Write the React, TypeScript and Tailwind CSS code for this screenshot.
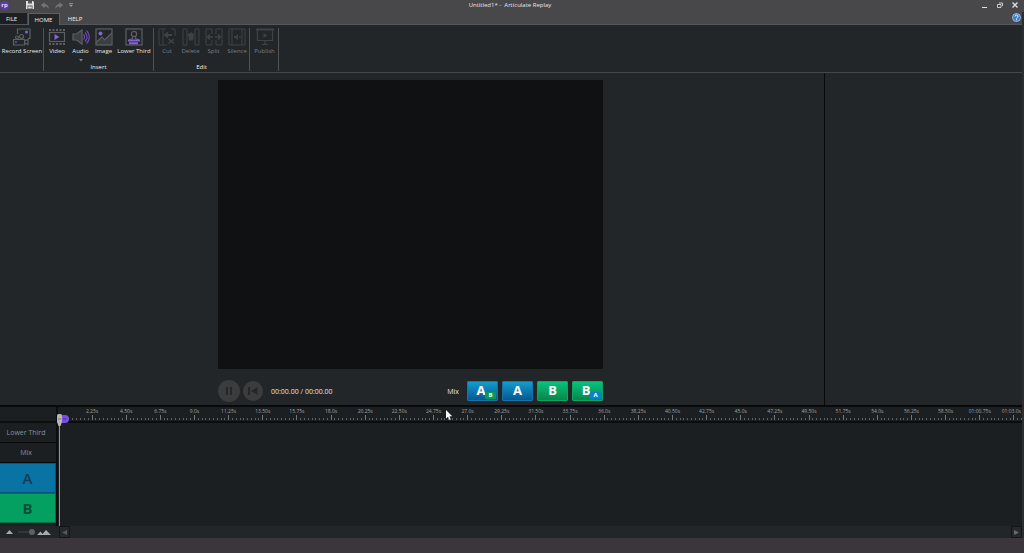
import type { ReactNode } from "react";
import clsx from "clsx";

const STEP = 2.25;
const MARKS = Array.from({ length: 28 }, (_, i) => (i + 1) * STEP);

function formatMark(t: number) {
  const min = Math.floor(t / 60);
  const sec = t - min * 60;
  const s = Number.isInteger(sec) ? sec.toFixed(1) : sec.toFixed(2);
  if (min === 0) return `${s}s`;
  return `0${min}:${sec < 10 ? "0" : ""}${s}s`;
}

/* ICONS */
function Icon({ children }: { children: ReactNode }) {
  return (
    <svg width="18" height="18" viewBox="0 0 18 18" fill="none" stroke="#5c6063" strokeWidth="1.2" aria-hidden>
      {children}
    </svg>
  );
}

const recordIcon = (
  <Icon>
    <path d="M4.500 6V1H17v9.500h-2" />
    <circle cx="13.500" cy="4" r="1.500" fill="#8461dc" stroke="none" />
    <circle cx="4" cy="9.500" r="1.500" />
    <circle cx="8.500" cy="8.500" r="2" />
    <path d="M.6 11.500h11v5.500H.6zM11.500 13l3.500-1.500v5l-3.500-1.500" />
    <path d="M2 14h2" stroke="#8461dc" />
  </Icon>
);

const videoIcon = (
  <Icon>
    <path d="M1 2h16M1 16h16" strokeWidth="2" strokeDasharray="2 1.500" />
    <rect x="1.500" y="4.500" width="15" height="9" />
    <path d="M6.500 6v6l5-3z" fill="#8461dc" stroke="none" />
  </Icon>
);

const audioIcon = (
  <Icon>
    <path d="M1 6h3.500L10 2v14l-5.500-4H1z" fill="#3b3f42" />
    <path d="M11.500 6.500a3.500 3.500 0 0 1 0 5M13 4.500a6 6 0 0 1 0 9M14.500 2.500a9 9 0 0 1 0 13" stroke="#684ab0" />
  </Icon>
);

const imageIcon = (
  <Icon>
    <path d="m1 14.500 5.500-4.500L8.500 12 16.500 7v10H1z" fill="#3b3f42" stroke="none" />
    <rect x="1" y="1" width="16" height="16" />
    <path d="m1 14.500 6-5.500 2.500 3L17 5" />
    <circle cx="5.500" cy="5.500" r="2" fill="#8461dc" stroke="none" />
  </Icon>
);

const lowerThirdIcon = (
  <Icon>
    <rect x="1" y="1" width="16" height="16" />
    <circle cx="9" cy="6" r="2.600" />
    <path d="M7.500 8.500v2L4 12M10.500 8.500v2L14 12" />
    <path d="M3 12.500h12M4 15.300h9" stroke="#8461dc" strokeWidth="2" />
  </Icon>
);

const cutIcon = (
  <Icon>
    <path d="M9 17H1V1h4v16M5 1h3M13 1h4v7" strokeWidth="1" />
    <path d="M7 7h7M10 4.500 7 7l3 2.500" strokeWidth="1.800" />
    <path d="m10.500 11 5.500 4.500M16 11l-5.500 4.500" strokeWidth="1.500" />
  </Icon>
);

const deleteIcon = (
  <Icon>
    <path d="M5 1H1v16h4zM13 1h4v16h-4z" strokeWidth="1" />
    <path d="M6.500 6h5v1h-5zM7 8h4l-.5 4h-3zM8 5h2" fill="#575b5e" />
  </Icon>
);

const splitIcon = (
  <Icon>
    <path d="M7 6V1H1v16h6v-5M11 6V1h6v16h-6v-5" strokeWidth="1" />
    <path d="M2.500 9H8M10 9h5.500M5 6.500 2.500 9 5 11.500M13 6.500 15.500 9 13 11.500" strokeWidth="1.600" />
  </Icon>
);

const silenceIcon = (
  <Icon>
    <path d="M1 1h16v16H1zM4 1v16M14 1v16" strokeWidth="1" />
    <path d="M6 8h1.500L10 6v6l-2.500-2H6z" fill="#575b5e" stroke="none" />
    <path d="M11 9h2" />
  </Icon>
);

const publishIcon = (
  <Icon>
    <path d="M0 1.500h18" strokeWidth="2" />
    <path d="M1.500 2v10.500h15V2M9 12.500V16M6 16.500h6" />
    <path d="M7.500 5v5l4-2.500z" fill="#575b5e" stroke="none" />
  </Icon>
);

interface ToolProps {
  label: string;
  icon: ReactNode;
  className: string;
  disabled?: boolean;
  menu?: boolean;
}

function Tool({ label, icon, className, disabled, menu }: ToolProps) {
  return (
    <button
      type="button"
      disabled={disabled}
      className={clsx(
        "flex flex-col items-center gap-px whitespace-nowrap text-[6px] leading-[8px]",
        disabled ? "text-[#7c7f82]" : "text-[#e6e7e8]",
        className,
      )}
    >
      <span className={clsx(disabled && "opacity-50")}>{icon}</span>
      <span>{label}</span>
      {menu && (
        <svg width="4" height="3" viewBox="0 0 4 3" className="mt-[3px]" aria-hidden>
          <path d="M0 0h4L2 2.500z" fill="#85888b" />
        </svg>
      )}
    </button>
  );
}

function Group({ label, children }: { label?: string; children: ReactNode }) {
  return (
    <section className="flex flex-col justify-between border-r border-[#505356]">
      <div className="flex items-start pl-px">{children}</div>
      {label && <div className="text-center text-[6px] leading-[8px] text-[#f0f0f1]">{label}</div>}
    </section>
  );
}

function MixButton({ main, sub }: { main: "A" | "B"; sub?: "A" | "B" }) {
  return (
    <button
      type="button"
      aria-label={sub ? `${main} with ${sub} inset` : main}
      className={clsx(
        "relative flex h-5 w-[31px] items-center justify-center rounded-[1px] border text-[13px] leading-none font-bold text-white",
        main === "A"
          ? "border-[#1374ab] bg-linear-to-b from-[#159bce] to-[#075992]"
          : "border-[#08a85e] bg-linear-to-b from-[#08c27d] to-[#098649]",
      )}
    >
      <span className={clsx(sub && "pr-[3px]")}>{main}</span>
      {sub && (
        <span
          className={clsx(
            "absolute right-px bottom-px flex h-[7px] w-[11px] items-center justify-center rounded-[1px] text-[6px] leading-none",
            sub === "A" ? "bg-[#0a82c8]" : "bg-[#079a55]",
          )}
        >
          {sub}
        </span>
      )}
    </button>
  );
}

function Ticks({ count, major }: { count: number; major?: number }) {
  return (
    <div className="flex h-[5px] items-end">
      {Array.from({ length: count }).map((_, i) => (
        <span key={i} className="flex flex-1 justify-center">
          <span className={clsx("w-px", i === major ? "h-[5px] bg-[#74777a]" : "h-[2px] bg-[#606366]")} />
        </span>
      ))}
    </div>
  );
}

function TitleBar() {
  return (
    <header className="grid h-3 grid-cols-3 items-center bg-[#48484a] pb-[2px] text-[#e6e6e7]">
      <div className="flex items-center">
        <span className="flex size-[9px] items-center justify-center rounded-full bg-[#5e3aa8] text-[6px] leading-none font-bold text-[#e4dcf6]">
          rp
        </span>
        <button type="button" aria-label="Save" className="ml-[17px]">
          <svg width="8" height="8" viewBox="0 0 8 8" aria-hidden>
            <path d="M0 0h7l1 1v7H0z" fill="#dededf" />
            <path d="M2 0h4v2.500H2zM1.500 4.500h5V8h-5z" fill="#57575a" />
            <path d="M2.200 5.500h3.500v2H2.200z" fill="#dededf" />
          </svg>
        </button>
        <button type="button" aria-label="Undo" className="ml-[7px]">
          <svg width="8" height="7" viewBox="0 0 8 7" aria-hidden>
            <path d="M0 3 3.500 0v2C6 2 7.500 3.500 8 7 6.500 5 5.500 4.500 3.500 4.500v2z" fill="#737376" />
          </svg>
        </button>
        <button type="button" aria-label="Redo" className="ml-[6px]">
          <svg width="8" height="7" viewBox="0 0 8 7" aria-hidden>
            <path d="M8 3 4.500 0v2C2 2 .5 3.500 0 7c1.500-2 2.500-2.500 4.500-2.500v2z" fill="#737376" />
          </svg>
        </button>
        <button type="button" aria-label="Customize toolbar" className="ml-[6px]">
          <svg width="4" height="4" viewBox="0 0 4 4" aria-hidden>
            <path d="M0 0h4v.8H0zM0 1.700h4L2 4z" fill="#9b9b9d" />
          </svg>
        </button>
      </div>
      <h1 className="pr-1 text-center text-[6px] leading-[8px]">Untitled1* -&nbsp; Articulate Replay</h1>
      <div className="flex items-center justify-end gap-[9px] pr-[6px]">
        <button type="button" aria-label="Minimize">
          <svg width="6" height="6" viewBox="0 0 6 6" aria-hidden>
            <path d="M0 5h5v1H0z" fill="#dededf" />
          </svg>
        </button>
        <button type="button" aria-label="Restore">
          <svg width="6" height="6" viewBox="0 0 6 6" fill="none" stroke="#c8c8ca" aria-hidden>
            <path d="M.5 2.500h3.500v3H.5zM2 1h3.500v3" />
          </svg>
        </button>
        <button type="button" aria-label="Close">
          <svg width="6" height="6" viewBox="0 0 6 6" stroke="#dededf" strokeWidth="1.400" aria-hidden>
            <path d="m.5.5 5 5m0-5-5 5" />
          </svg>
        </button>
      </div>
    </header>
  );
}

function Tabs() {
  return (
    <nav className="flex h-[13px] items-stretch border-b border-[#53575b] bg-[#48484a] text-[6px] leading-[8px] text-[#f0f0f1]">
      <button type="button" className="mt-px w-[27px] bg-[#1d2023] pr-1">FILE</button>
      <button type="button" className="mt-px -mb-px ml-px w-8 border border-b-0 border-[#5b5e62] bg-[#222629] pr-px">
        HOME
      </button>
      <button type="button" className="mt-px w-[30px]">HELP</button>
      <button type="button" aria-label="Help" className="mr-px mb-px ml-auto">
        <svg width="9" height="9" viewBox="0 0 9 9" aria-hidden>
          <circle cx="4.500" cy="4.500" r="4" fill="#3a7fd0" stroke="#a9c9ef" strokeWidth=".8" />
          <path d="M3 3.500c0-2 3-2 3 0 0 1-1.500 1-1.500 2M4.500 6.300v1" stroke="#fff" strokeWidth="1" fill="none" />
        </svg>
      </button>
    </nav>
  );
}

function Ribbon() {
  return (
    <div className="flex h-12 items-stretch border-b border-[#46494c] bg-[#222629] pt-[3px] pb-px">
      <Group>
        <Tool label="Record Screen" icon={recordIcon} className="w-[42px]" />
      </Group>
      <Group label="Insert">
        <Tool label="Video" icon={videoIcon} className="w-6" />
        <Tool label="Audio" icon={audioIcon} className="w-[23px]" menu />
        <Tool label="Image" icon={imageIcon} className="w-[23px]" />
        <Tool label="Lower Third" icon={lowerThirdIcon} className="w-[38px]" />
      </Group>
      <Group label="Edit">
        <Tool label="Cut" icon={cutIcon} className="w-6" disabled />
        <Tool label="Delete" icon={deleteIcon} className="w-[23px]" disabled />
        <Tool label="Split" icon={splitIcon} className="w-[23px]" disabled />
        <Tool label="Silence" icon={silenceIcon} className="w-6" disabled />
      </Group>
      <Group>
        <Tool label="Publish" icon={publishIcon} className="w-[27px]" disabled />
      </Group>
    </div>
  );
}

function Preview() {
  return (
    <main className="flex flex-1 justify-center pt-[7px] pr-[3px] pb-[3px]">
      <div className="w-[385px]">
        <div className="aspect-[4/3] bg-[#101113]" />
        <div className="mt-[11px] flex h-[22px] items-center">
          <button type="button" aria-label="Pause">
            <svg width="22" height="22" viewBox="0 0 22 22" aria-hidden>
              <circle cx="11" cy="11" r="11" fill="#3b3c3e" />
              <path d="M9 7v8M13 7v8" stroke="#24272a" strokeWidth="2" />
            </svg>
          </button>
          <button type="button" aria-label="Back to start" className="ml-[3px]">
            <svg width="20" height="20" viewBox="0 0 20 20" aria-hidden>
              <circle cx="10" cy="10" r="10" fill="#3b3c3e" />
              <path d="M5 6h2v8H5zM14.500 6v8L8 10z" fill="#24272a" />
            </svg>
          </button>
          <span className="ml-2 pt-[3px] text-[7px] leading-[10px] text-[#e2e3e4]">00:00.00 / 00:00.00</span>
          <span className="mr-2 ml-auto pt-[3px] text-[7px] leading-[10px] text-[#e2e3e4]">Mix</span>
          <div className="flex gap-1">
            <MixButton main="A" sub="B" />
            <MixButton main="A" />
            <MixButton main="B" />
            <MixButton main="B" sub="A" />
          </div>
        </div>
      </div>
    </main>
  );
}

function Timeline() {
  return (
    <section className="relative flex flex-1 flex-col border-t-2 border-[#08090b] bg-[#1b1f22]">
      <div className="flex flex-1">
        <div className="flex w-[58px] flex-col border-r-2 border-[#0b0d0f] text-center text-[7px] leading-[10px] text-[#8d9093]">
          <div className="h-4 border-b-2 border-[#0b0d0f]" />
          <div className="flex h-5 items-center justify-center border-b border-[#08090b] pt-[2px] pr-1">Lower Third</div>
          <div className="flex h-5 items-center justify-center border-b border-[#08090b] pt-[2px] pr-1">Mix</div>
          <div className="flex h-[30px] items-center justify-center border border-l-0 border-[#085579] bg-[#0973a4] text-[15px] font-semibold text-[#103e56]">
            A
          </div>
          <div className="flex h-[30px] items-center justify-center border border-l-0 border-[#087048] bg-[#04a062] text-[15px] font-bold text-[#0b5136]">
            B
          </div>
        </div>

        <div className="min-w-0 flex-1">
          {/* ruler */}
          <div className="flex h-4 overflow-hidden border-b-2 border-[#0b0d0f]">
            <div className="flex w-[17px] flex-col justify-end pb-px">
              <Ticks count={4} />
            </div>
            <div className="-mr-[9px] flex flex-1">
              {MARKS.map((t, i) => (
                <div key={t} className="flex min-w-0 flex-1 flex-col justify-between pb-px">
                  {/* the last cell runs past the edge, so its label sits against it */}
                  <span
                    className={clsx(
                      "flex text-[5px] leading-[8px] whitespace-nowrap text-[#a0a3a6]",
                      i === MARKS.length - 1 ? "justify-end pr-[10px]" : "justify-center",
                    )}
                  >
                    {formatMark(t)}
                  </span>
                  <Ticks count={9} major={4} />
                </div>
              ))}
            </div>
          </div>
        </div>
      </div>

      <div className="flex h-3 items-center bg-[#232629]">
        <div className="flex w-[59px] items-center pl-[6px]">
          <svg width="7" height="4" viewBox="0 0 7 4" aria-hidden>
            <path d="M0 4 3.500 0 7 4z" fill="#a5abb0" />
          </svg>
          <input
            type="range"
            aria-label="Timeline zoom"
            defaultValue={100}
            className="ml-[5px] h-[6px] w-[17px] appearance-none bg-linear-to-b from-transparent from-35% via-[#494b4d] via-50% to-transparent to-65% [&::-webkit-slider-thumb]:size-[6px] [&::-webkit-slider-thumb]:appearance-none [&::-webkit-slider-thumb]:rounded-full [&::-webkit-slider-thumb]:bg-[#5f6062]"
          />
          <svg width="14" height="5" viewBox="0 0 14 5" className="ml-[2px]" aria-hidden>
            <path d="m0 5 3.500-3.500L5.500 4 9 0l5 5z" fill="#a5abb0" />
          </svg>
        </div>
        <button
          type="button"
          aria-label="Scroll left"
          className="flex h-3 w-[11px] items-center justify-center border border-[#131517] bg-[#26282b]"
        >
          <svg width="5" height="5" viewBox="0 0 5 5" aria-hidden>
            <path d="M5 0v5L0 2.500z" fill="#55575a" />
          </svg>
        </button>
        <button
          type="button"
          aria-label="Scroll right"
          className="ml-auto flex h-3 w-[11px] items-center justify-center border border-[#131517] bg-[#26282b]"
        >
          <svg width="5" height="5" viewBox="0 0 5 5" aria-hidden>
            <path d="M0 0v5l5-2.500z" fill="#66686a" />
          </svg>
        </button>
      </div>

      {/* playhead */}
      <div className="absolute top-[7px] bottom-3 left-[57px] flex w-[5px] flex-col items-center">
        <svg width="5" height="12" viewBox="0 0 5 12" aria-hidden>
          <path d="M0 1.500Q0 0 1.500 0h2Q5 0 5 1.500V8L3.500 12h-2L0 8z" fill="#b9b7b4" />
          <path d="M1 5h3" stroke="#77746f" />
        </svg>
        <div className="w-px flex-1 bg-[#8f9294]" />
      </div>
      <svg width="7" height="8" viewBox="0 0 7 8" className="absolute top-2 left-[62px]" aria-hidden>
        <path d="M0 0h3a4 4 0 0 1 0 8H0z" fill="#7552e0" />
        <path d="M1 4h3" stroke="#3f2f83" />
      </svg>

      {/* pointer */}
      <svg width="7" height="11" viewBox="0 0 7 11" className="absolute top-[3px] left-[446px]" aria-hidden>
        <path d="M0 0v8.500l2-1.800L3.500 10l1.300-.6L3.500 6.200h2.700z" fill="#fff" />
      </svg>
    </section>
  );
}

export default function App() {
  return (
    <div className="flex min-h-screen flex-col overflow-hidden bg-[#222629] font-['Open_Sans','Noto_Sans',sans-serif]">
      <TitleBar />
      <div className="flex flex-1 flex-col border-r-2 border-[#2d2d30]">
        <Tabs />
        <Ribbon />
        <div className="flex">
          <Preview />
          <aside className="w-[198px] border-l border-[#08090b]" />
        </div>
        <Timeline />
      </div>
      <footer className="h-[15px] bg-[#3a363b]" />
    </div>
  );
}
